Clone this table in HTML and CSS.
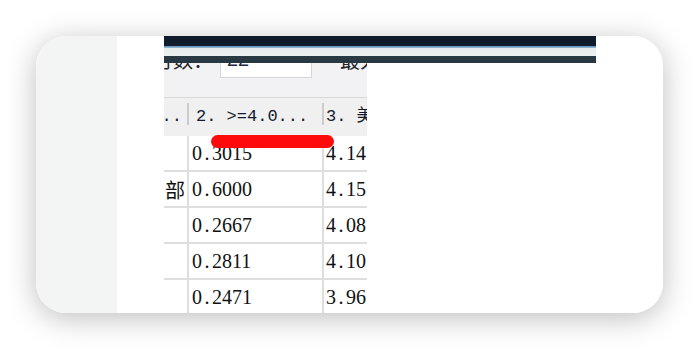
FILE: index.html
```html
<!DOCTYPE html>
<html lang="zh">
<head>
<meta charset="utf-8">
<title>数据表</title>
<link rel="stylesheet" href="styles.css">
</head>
<body>
<div class="card">
  <aside class="side"></aside>
  <main class="main">
    <div class="shot">
      <div class="titlebar"></div>
      <div class="panel">
        <div class="toolbar">
          <div class="tools">
            <span class="label">行数：</span>
            <div class="input">22</div>
            <span class="label next">最大数：</span>
          </div>
        </div>
        <div class="grid head">
          <div class="th first"><span>1. 部门名称...</span></div>
          <div class="th">2. &gt;=4.0...</div>
          <div class="th third">3. 美</div>
        </div>
        <div class="grid row">
          <div class="td first"></div>
          <div class="td">0<span class="d">.</span>3015</div>
          <div class="td third">4<span class="d">.</span>14</div>
        </div>
        <div class="grid row">
          <div class="td first cjk"><span>销售部</span></div>
          <div class="td">0<span class="d">.</span>6000</div>
          <div class="td third">4<span class="d">.</span>15</div>
        </div>
        <div class="grid row">
          <div class="td first"></div>
          <div class="td">0<span class="d">.</span>2667</div>
          <div class="td third">4<span class="d">.</span>08</div>
        </div>
        <div class="grid row">
          <div class="td first"></div>
          <div class="td">0<span class="d">.</span>2811</div>
          <div class="td third">4<span class="d">.</span>10</div>
        </div>
        <div class="grid row">
          <div class="td first"></div>
          <div class="td">0<span class="d">.</span>2471</div>
          <div class="td third">3<span class="d">.</span>96</div>
        </div>
      </div>
      <div class="mark"></div>
    </div>
  </main>
</div>
</body>
</html>
```

FILE: styles.css
```css
html, body {
  margin: 0;
  padding: 0;
  background: #ffffff;
}
body {
  width: 700px;
  height: 350px;
  overflow: hidden;
  font-family: "Liberation Serif", "Noto Sans CJK SC", serif;
}
.card {
  margin: 36px 0 0 36px;
  width: 627px;
  height: 277px;
  border-radius: 30px;
  overflow: hidden;
  display: flex;
  background: #ffffff;
  box-shadow: 0 5px 30px rgba(0, 0, 0, 0.26);
}
.side {
  width: 81px;
  flex: none;
  background: #f3f5f5;
}
.main {
  flex: 1;
  padding-left: 47px;
  background: #ffffff;
}
.shot {
  position: relative;
  width: 432px;
}
.titlebar {
  height: 27px;
  background: linear-gradient(to bottom,
    #0f1a2b 0, #111d2e 10px,
    #5b8cba 10px, #9fbdd4 12px,
    #e8ecee 12px, #eef0f1 20px,
    #2a3a45 20px, #283842 27px);
}
.panel {
  width: 203px;
  overflow: hidden;
}
.toolbar {
  height: 34px;
  background: #f2f2f4;
  overflow: hidden;
}
.tools {
  display: flex;
  align-items: flex-start;
  margin-left: -11px;
  margin-top: -15px;
  white-space: nowrap;
}
.label {
  font-family: "Noto Sans CJK SC", sans-serif;
  font-size: 20px;
  line-height: 20px;
  margin-top: 2px;
  color: #222428;
}
.input {
  margin-left: 7px;
  width: 84px;
  height: 28px;
  flex: none;
  background: #ffffff;
  border: 1px solid #d2d5da;
  font-family: "Liberation Sans", sans-serif;
  font-size: 20px;
  line-height: 20px;
  padding-left: 6px;
  color: #222a44;
}
.next {
  margin-left: 28px;
}
.grid {
  display: grid;
  grid-template-columns: 23px 135px 1fr;
}
.head {
  height: 38px;
  background: #f0f0f0;
  border-top: 1px solid #d8d8d8;
  font-family: "Liberation Mono", "Noto Sans CJK SC", monospace;
  font-size: 17px;
  color: #141a2c;
}
.th {
  align-self: start;
  margin-top: 5px;
  height: 22px;
  border-left: 2px solid #cdcdcd;
  display: flex;
  align-items: flex-end;
  line-height: 17px;
  padding-left: 7px;
  white-space: nowrap;
  overflow: hidden;
}
.th.first {
  border-left: none;
  padding-left: 0;
  padding-right: 5px;
  justify-content: flex-end;
}
.th.third {
  padding-left: 2px;
}
.row {
  height: 34px;
  border-bottom: 2px solid #dedede;
  font-size: 20px;
  color: #111111;
}
.td {
  display: flex;
  align-items: center;
  border-left: 2px solid #dedede;
  padding-left: 3px;
  white-space: nowrap;
  overflow: hidden;
}
.td.first {
  border-left: none;
  padding-left: 0;
  padding-right: 2px;
  justify-content: flex-end;
}
.td.third {
  padding-left: 2px;
}
.cjk {
  font-family: "Noto Sans CJK SC", sans-serif;
  font-size: 20px;
}
.d {
  display: inline-block;
  width: 10px;
  text-align: center;
}
.mark {
  position: absolute;
  left: 47px;
  top: 99px;
  width: 123px;
  height: 13px;
  border-radius: 7px;
  background: #ff0a0a;
}
```
